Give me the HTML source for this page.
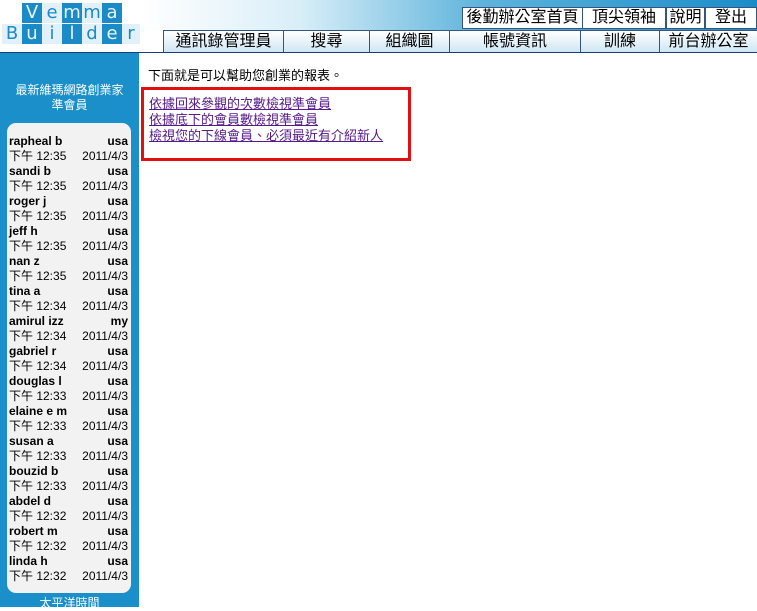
<!DOCTYPE html>
<html><head><meta charset="utf-8"><style>
*{margin:0;padding:0;box-sizing:border-box}
body{width:757px;height:607px;overflow:hidden;background:#fff;font-family:"Liberation Sans","Noto Sans CJK TC",sans-serif;position:relative}
#hdr{position:absolute;left:0;top:0;width:757px;height:30px;background:linear-gradient(90deg,#fff 0,#fff 140px,#d9eef8 300px,#5fb4dc 480px,#1b8cc8 757px)}
.sq{position:absolute;width:20px;height:20px;font-size:18px;text-align:center;line-height:19px;font-family:"DejaVu Sans",sans-serif}
.b{background:#1a8bc6;color:#e8f4fb}
.l{background:#e2f1f9;color:#1a8bc6}
#line{position:absolute;left:0;top:52px;width:757px;height:1px;background:#1c3f7a}
.nav{position:absolute;top:30px;height:22px;border-left:1px solid #33557f;border-top:1px solid #33557f;background:linear-gradient(#fff,#cfe6f4);font-size:16px;text-align:center;line-height:21px;color:#000}
.top{position:absolute;top:7px;height:22px;background:#fff;border:1px solid #33557f;font-size:16px;text-align:center;line-height:20px}
#side{position:absolute;left:0;top:53px;width:139px;height:554px;background:#1a8fc9}
#side .h{position:absolute;left:0;width:139px;text-align:center;color:#fff;font-size:12px}
#box{position:absolute;left:7px;top:70px;width:124px;height:470px;background:#f2f2f2;border-radius:9px;padding-top:11px}
.r{display:flex;justify-content:space-between;font-size:12px;line-height:15px;padding:0 3px 0 2px;color:#000}
.n{font-weight:bold}
#txt{position:absolute;left:148px;top:65px;font-size:13px}
#red{position:absolute;left:141px;top:87px;width:270px;height:74px;border:3px solid #e01010}
#red a{display:block;color:#551a8b;font-size:13px;line-height:16px;margin-left:5px}
#red div{margin-top:6px}
</style></head><body>
<div id="hdr"></div>
<div class="sq b" style="left:22px;top:3px">V</div>
<div class="sq l" style="left:42px;top:3px">e</div>
<div class="sq b" style="left:62px;top:3px">m</div>
<div class="sq l" style="left:82px;top:3px">m</div>
<div class="sq b" style="left:102px;top:3px">a</div>
<div class="sq l" style="left:2px;top:24px">B</div>
<div class="sq b" style="left:22px;top:24px">u</div>
<div class="sq l" style="left:42px;top:24px">i</div>
<div class="sq b" style="left:62px;top:24px">l</div>
<div class="sq l" style="left:82px;top:24px">d</div>
<div class="sq b" style="left:102px;top:24px">e</div>
<div class="sq l" style="left:122px;top:24px;width:18px">r</div>
<div class="top" style="left:462px;width:121px">後勤辦公室首頁</div>
<div class="top" style="left:582px;width:84px">頂尖領袖</div>
<div class="top" style="left:666px;width:39px">說明</div>
<div class="top" style="left:705px;width:52px">登出</div>
<div class="nav" style="left:163px;width:120px">通訊錄管理員</div>
<div class="nav" style="left:283px;width:86px">搜尋</div>
<div class="nav" style="left:369px;width:80px">組織圖</div>
<div class="nav" style="left:449px;width:131px">帳號資訊</div>
<div class="nav" style="left:580px;width:79px">訓練</div>
<div class="nav" style="left:659px;width:98px">前台辦公室</div>
<div id="line"></div>
<div id="side">
<div class="h" style="top:28px">最新維瑪網路創業家</div>
<div class="h" style="top:43px">準會員</div>
<div id="box">
<div class="r"><span class="n">rapheal b</span><span class="n">usa</span></div><div class="r"><span>下午 12:35</span><span>2011/4/3</span></div>
<div class="r"><span class="n">sandi b</span><span class="n">usa</span></div><div class="r"><span>下午 12:35</span><span>2011/4/3</span></div>
<div class="r"><span class="n">roger j</span><span class="n">usa</span></div><div class="r"><span>下午 12:35</span><span>2011/4/3</span></div>
<div class="r"><span class="n">jeff h</span><span class="n">usa</span></div><div class="r"><span>下午 12:35</span><span>2011/4/3</span></div>
<div class="r"><span class="n">nan z</span><span class="n">usa</span></div><div class="r"><span>下午 12:35</span><span>2011/4/3</span></div>
<div class="r"><span class="n">tina a</span><span class="n">usa</span></div><div class="r"><span>下午 12:34</span><span>2011/4/3</span></div>
<div class="r"><span class="n">amirul izz</span><span class="n">my</span></div><div class="r"><span>下午 12:34</span><span>2011/4/3</span></div>
<div class="r"><span class="n">gabriel r</span><span class="n">usa</span></div><div class="r"><span>下午 12:34</span><span>2011/4/3</span></div>
<div class="r"><span class="n">douglas l</span><span class="n">usa</span></div><div class="r"><span>下午 12:33</span><span>2011/4/3</span></div>
<div class="r"><span class="n">elaine e m</span><span class="n">usa</span></div><div class="r"><span>下午 12:33</span><span>2011/4/3</span></div>
<div class="r"><span class="n">susan a</span><span class="n">usa</span></div><div class="r"><span>下午 12:33</span><span>2011/4/3</span></div>
<div class="r"><span class="n">bouzid b</span><span class="n">usa</span></div><div class="r"><span>下午 12:33</span><span>2011/4/3</span></div>
<div class="r"><span class="n">abdel d</span><span class="n">usa</span></div><div class="r"><span>下午 12:32</span><span>2011/4/3</span></div>
<div class="r"><span class="n">robert m</span><span class="n">usa</span></div><div class="r"><span>下午 12:32</span><span>2011/4/3</span></div>
<div class="r"><span class="n">linda h</span><span class="n">usa</span></div><div class="r"><span>下午 12:32</span><span>2011/4/3</span></div>
</div>
<div class="h" style="top:541px">太平洋時間</div>
</div>
<div id="txt">下面就是可以幫助您創業的報表。</div>
<div id="red"><div>
<a href="#">依據回來參觀的次數檢視準會員</a>
<a href="#">依據底下的會員數檢視準會員</a>
<a href="#">檢視您的下線會員、必須最近有介紹新人</a>
</div></div>
</body></html>
